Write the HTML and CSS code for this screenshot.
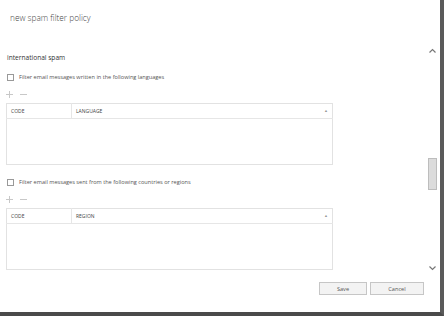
FILE: index.html
```html
<!DOCTYPE html>
<html lang="en">
  <head>
    <meta charset="UTF-8" />
    <meta name="viewport" content="width=device-width, initial-scale=1.0" />
    <title>new spam filter policy</title>
    <link rel="stylesheet" href="styles.css">
  </head>
  <body>
    <div class="window">
      <div class="title">new spam filter policy</div>
      <div class="main">
        <div class="content">
          <div class="section">international spam</div>

          <label class="check"><span class="box"></span>Filter email messages written in the following languages</label>
          <div class="tools">
            <svg width="7" height="7" viewBox="0 0 7 7"><path d="M3.5 0V7M0 3.5H7" stroke="#c8c8c8" stroke-width="1"/></svg>
            <svg width="7" height="7" viewBox="0 0 7 7"><path d="M0 3.5H7" stroke="#c8c8c8" stroke-width="1"/></svg>
          </div>
          <table class="grid">
            <tr class="head">
              <td class="code">CODE</td>
              <td class="name">LANGUAGE<span class="sort">&#9650;</span></td>
            </tr>
            <tr class="rows"><td colspan="2"></td></tr>
          </table>

          <label class="check second"><span class="box"></span>Filter email messages sent from the following countries or regions</label>
          <div class="tools">
            <svg width="7" height="7" viewBox="0 0 7 7"><path d="M3.5 0V7M0 3.5H7" stroke="#c8c8c8" stroke-width="1"/></svg>
            <svg width="7" height="7" viewBox="0 0 7 7"><path d="M0 3.5H7" stroke="#c8c8c8" stroke-width="1"/></svg>
          </div>
          <table class="grid">
            <tr class="head">
              <td class="code">CODE</td>
              <td class="name">REGION<span class="sort">&#9650;</span></td>
            </tr>
            <tr class="rows"><td colspan="2"></td></tr>
          </table>
        </div>
        <div class="scrollbar">
          <svg width="7" height="5" viewBox="0 0 7 5"><path d="M0.5 4.5L3.5 1.5L6.5 4.5" fill="none" stroke="#777" stroke-width="1.2"/></svg>
          <div class="thumb"></div>
          <svg class="down" width="7" height="5" viewBox="0 0 7 5"><path d="M0.5 0.5L3.5 3.5L6.5 0.5" fill="none" stroke="#777" stroke-width="1.2"/></svg>
        </div>
      </div>
      <div class="footer">
        <button type="button" class="btn save">Save</button>
        <button type="button" class="btn cancel">Cancel</button>
      </div>
    </div>
  </body>
</html>
```

FILE: styles.css
```css
body {
  margin: 0;
  background-color: #fff;
  font-family: "Open Sans", "Noto Sans", sans-serif;
}
.window {
  box-sizing: border-box;
  width: 444px;
  height: 316px;
  border-right: 4px solid #5a5a5a;
  border-bottom: 4px solid #4a4a4a;
  display: flex;
  flex-direction: column;
  background-color: #fff;
}
.title {
  height: 42px;
  padding: 12px 0 0 10px;
  box-sizing: border-box;
  font-size: 8.3px;
  font-weight: 300;
  color: #444;
}
.main {
  display: flex;
  height: 230px;
}
.content {
  flex: 1;
  padding: 11px 0 0 6px;
}
.section {
  margin: 0 0 11px 1px;
  font-size: 6.6px;
  color: #333;
}
.check {
  display: flex;
  align-items: center;
  margin-left: 1px;
  font-size: 5.6px;
  color: #555;
}
.check.second {
  margin-top: 13px;
}
.box {
  width: 5px;
  height: 5px;
  border: 1px solid #999;
  margin-right: 5px;
}
.tools {
  display: flex;
  gap: 7px;
  margin: 10px 0 5px 0;
}
.grid {
  width: 327px;
  border-collapse: collapse;
  border: 1px solid #e2e2e2;
}
.grid td {
  padding: 0 0 0 4px;
  font-size: 5px;
  color: #444;
}
.head td {
  height: 14px;
  border-bottom: 1px solid #e6e6e6;
}
.head .code {
  width: 60px;
  border-right: 1px solid #e6e6e6;
}
.sort {
  float: right;
  margin-right: 4px;
  font-size: 4px;
  color: #999;
}
.rows td {
  height: 45px;
}
.scrollbar {
  width: 14px;
  margin-right: 1px;
  display: flex;
  flex-direction: column;
  align-items: center;
  padding-top: 6px;
}
.thumb {
  width: 7px;
  height: 30px;
  margin-top: 105px;
  background-color: #dcdcdc;
  border: 1px solid #bdbdbd;
}
.down {
  margin-top: 76px;
}
.footer {
  display: flex;
  justify-content: flex-end;
  gap: 3px;
  padding: 10px 16px 0 0;
}
.btn {
  height: 13px;
  padding: 0;
  font-family: "Open Sans", "Noto Sans", sans-serif;
  font-size: 5.6px;
  color: #555;
  background-color: #f3f3f3;
  border: 1px solid #c6c6c6;
}
.save {
  width: 48px;
}
.cancel {
  width: 54px;
}
```
